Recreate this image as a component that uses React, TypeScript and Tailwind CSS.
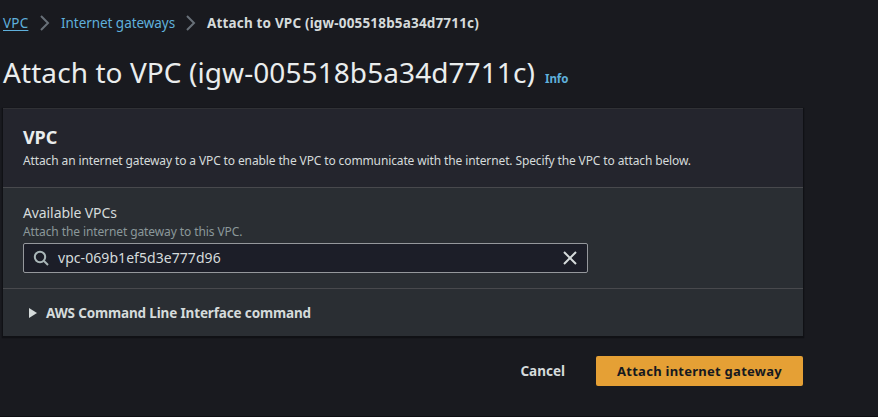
import React from "react";

function Crumb() {
  return (
    <svg className="mx-[11px] h-4 w-2.5 shrink-0" viewBox="0 0 10 16" fill="none" stroke="#687078" strokeWidth="2">
      <path d="M1 1L8 8L1 15" />
    </svg>
  );
}

export default function App() {
  return (
    <div className="flex h-[417px] w-[878px] flex-col overflow-hidden border-b border-[#0d0e12] bg-[#191a1f] pl-[3px] font-['Noto_Sans','Open_Sans',sans-serif] text-sm text-[#d5dbdb]">
      <nav className="mt-3 flex h-[22px] items-center whitespace-nowrap leading-[22px]">
        <a className="w-[26px] text-[13.5px] tracking-[0.2px] text-[#5fb0dc] underline underline-offset-2">VPC</a>
        <Crumb />
        <a className="w-[114px] text-[13.5px] tracking-[-0.05px] text-[#5fb0dc]">Internet gateways</a>
        <Crumb />
        <span className="text-[13.5px] font-bold tracking-[0.17px]">Attach to VPC (igw-005518b5a34d7711c)</span>
      </nav>
      <header className="mt-5 flex h-9 items-baseline whitespace-nowrap leading-9">
        <h1 className="text-[28px] tracking-[0.08px] text-[#eaeded]">Attach to VPC (igw-005518b5a34d7711c)</h1>
        <a className="ml-2.5 text-[11.5px] font-bold text-[#5fb0dc]">Info</a>
      </header>
      <main className="mt-[18px] h-[228px] w-[800px] shrink-0 border-t border-[#303135] bg-[#2a2e33] shadow-[0_1px_1px_1px_#101115]">
        <section className="h-[79px] border-b border-[#48494d] bg-[#24252d] px-5 pt-[17px] whitespace-nowrap">
          <h2 className="text-lg leading-[22px] font-bold tracking-[-0.1px] text-[#eaeded]">VPC</h2>
          <p className="mt-1 text-xs leading-[18px] tracking-[-0.12px]">
            Attach an internet gateway to a VPC to enable the VPC to communicate with the internet. Specify the VPC to attach below.
          </p>
        </section>
        <section className="h-[101px] border-b border-[#48494d] px-5 pt-[14px] whitespace-nowrap">
          <label className="block leading-[22px] tracking-[-0.1px]">Available VPCs</label>
          <p className="text-xs leading-[16px] tracking-[-0.1px] text-[#8b989a]">Attach the internet gateway to this VPC.</p>
          <div className="mt-[3px] flex h-[30px] w-[565px] items-center rounded-xs border border-[#95989c] bg-[#1c1e28] pr-2.5 pl-[9px]">
            <svg className="h-4 w-4" viewBox="0 0 16 16" fill="none" stroke="#aab7b8" strokeWidth="2">
              <circle cx="7" cy="7" r="5.2" />
              <path d="M11 11L15 15" />
            </svg>
            <span className="ml-[9px] flex-1 tracking-[0.06px]">vpc-069b1ef5d3e777d96</span>
            <svg className="h-3.5 w-3.5" viewBox="0 0 14 14" fill="none" stroke="#d5dbdb" strokeWidth="2">
              <path d="M1 1L13 13M13 1L1 13" />
            </svg>
          </div>
        </section>
        <section className="flex h-[47px] items-center whitespace-nowrap pl-[26px]">
          <svg className="h-3 w-2" viewBox="0 0 8 12" fill="#d5dbdb"><path d="M0 1L8 6L0 11Z" /></svg>
          <span className="ml-[9px] pt-px text-[13.5px] leading-5 font-bold tracking-[-0.15px]">AWS Command Line Interface command</span>
        </section>
      </main>
      <footer className="mt-5 flex h-[30px] w-[800px] shrink-0 items-center justify-end gap-[31px] whitespace-nowrap text-[13.5px] font-bold">
        <button className="pt-px">Cancel</button>
        <button className="h-[30px] w-[207px] rounded-xs bg-[#e5a035] text-[13px] tracking-[0.26px] text-[#16191f]">Attach internet gateway</button>
      </footer>
    </div>
  );
}
